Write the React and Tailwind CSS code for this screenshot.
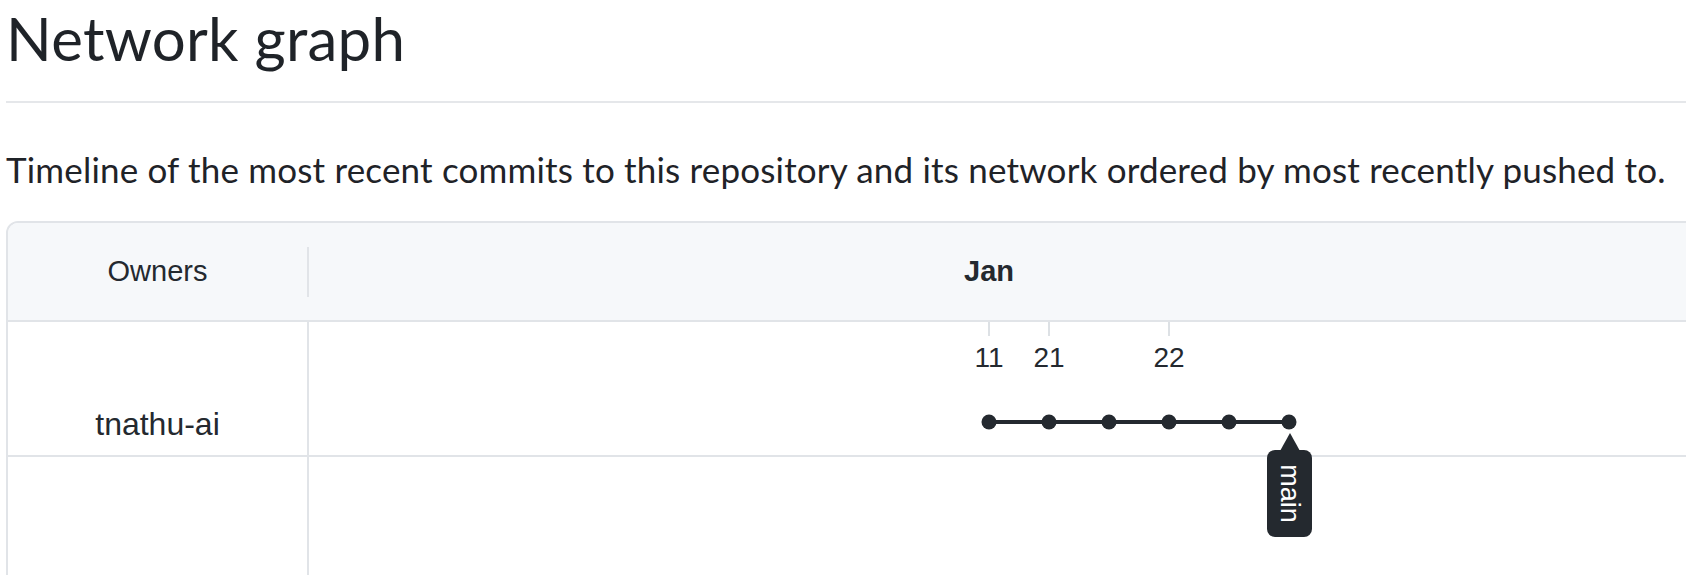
const commits = [0, 1, 2, 3, 4, 5];
const days = [
  { label: '11', x: 680 },
  { label: '21', x: 740 },
  { label: '22', x: 860 },
];

function Graph() {
  return (
    <svg className="absolute inset-0 h-full w-full overflow-visible" fill="none">
      {days.map((d) => (
        <g key={d.label}>
          <line x1={d.x} y1={0} x2={d.x} y2={14} stroke="#dde1e5" strokeWidth={2} />
          <text
            x={d.x}
            y={45}
            textAnchor="middle"
            fontSize={28}
            fill="#24292f"
            fontFamily="Liberation Sans, Arial, sans-serif"
          >
            {d.label}
          </text>
        </g>
      ))}
      <line x1={680} y1={100} x2={980} y2={100} stroke="#24292f" strokeWidth={4} />
      {commits.map((i) => (
        <circle key={i} cx={680 + i * 60} cy={100} r={7.5} fill="#24292f" />
      ))}
    </svg>
  );
}

function BranchLabel() {
  return (
    <div className="absolute left-[1259px] top-[111px] z-10 flex w-[45px] flex-col items-center">
      <div className="h-0 w-0 border-x-[10px] border-b-[18px] border-x-transparent border-b-[#24292f]" />
      <div className="-mt-px flex h-[87px] w-[45px] items-center justify-center rounded-[8px] bg-[#24292f]">
        <span className="rotate-90 whitespace-nowrap text-[27px] leading-none text-white">main</span>
      </div>
    </div>
  );
}

export default function App() {
  return (
    <div className="h-[575px] w-full overflow-hidden bg-white pl-[6px] text-[#1f2328]">
      <h1 className="mt-[2px] font-['Lato',sans-serif] text-[60px] font-normal leading-[72px] tracking-[0.27px]">
        Network graph
      </h1>
      <div className="mt-[27px] h-[2px] bg-[#e5e7ea]" />
      <p className="mt-[45px] font-['Lato',sans-serif] text-[35px] leading-[42px] tracking-[0.18px]">
        Timeline of the most recent commits to this repository and its network ordered by most recently pushed to.
      </p>

      <div className="mt-[31px] w-[1740px] rounded-t-[12px] border-2 border-[#e1e4e8] font-['Liberation_Sans',Arial,sans-serif] text-[#24292f]">
        <div className="flex h-[99px] items-center rounded-t-[10px] border-b-2 border-[#e1e4e8] bg-[#f6f8fa]">
          <div className="w-[299px] text-center text-[29px]">Owners</div>
          <div className="h-[50px] w-[2px] bg-[#e1e4e8]" />
          <div className="relative self-stretch flex-1">
            <span className="absolute left-[680px] top-1/2 -translate-x-1/2 -translate-y-1/2 text-[29px] font-bold">
              Jan
            </span>
          </div>
        </div>

        <div className="relative">
          <div className="flex h-[135px] border-b-2 border-[#e1e4e8]">
            <div className="w-[299px] pt-[86px] text-center text-[32px] leading-[32px]">tnathu-ai</div>
            <div className="relative flex-1 border-l-2 border-[#e1e4e8]">
              <Graph />
            </div>
          </div>
          <div className="flex h-[150px]">
            <div className="w-[299px]" />
            <div className="flex-1 border-l-2 border-[#e1e4e8]" />
          </div>
          <BranchLabel />
        </div>
      </div>
    </div>
  );
}
